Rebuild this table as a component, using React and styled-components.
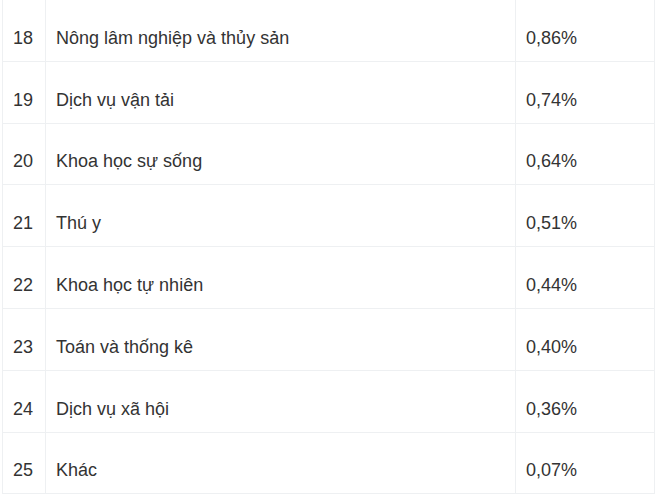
import React from 'react'
import styled, { createGlobalStyle } from 'styled-components'

const GlobalStyle = createGlobalStyle`
  html, body {
    margin: 0;
    padding: 0;
    background: #fff;
  }
`

const Table = styled.table`
  margin: -1px 0 0 2px;
  width: 653px;
  border-collapse: collapse;
  font-family: 'Liberation Sans', Arial, sans-serif;
  font-size: 18px;
  color: #333;
`

const Cell = styled.td`
  height: 61.8px;
  box-sizing: border-box;
  padding: 0 10px 12px;
  vertical-align: bottom;
  border: 1px solid #eef0f2;
  width: ${p => p.$w || 'auto'};
`

const rows = [
  ['18', 'Nông lâm nghiệp và thủy sản', '0,86%'],
  ['19', 'Dịch vụ vận tải', '0,74%'],
  ['20', 'Khoa học sự sống', '0,64%'],
  ['21', 'Thú y', '0,51%'],
  ['22', 'Khoa học tự nhiên', '0,44%'],
  ['23', 'Toán và thống kê', '0,40%'],
  ['24', 'Dịch vụ xã hội', '0,36%'],
  ['25', 'Khác', '0,07%'],
]

export default function App() {
  return (
    <>
      <GlobalStyle />
      <Table>
        <tbody>
          {rows.map(r => (
            <tr key={r[0]}>
              <Cell $w="43px">{r[0]}</Cell>
              <Cell $w="470px">{r[1]}</Cell>
              <Cell>{r[2]}</Cell>
            </tr>
          ))}
        </tbody>
      </Table>
    </>
  )
}
